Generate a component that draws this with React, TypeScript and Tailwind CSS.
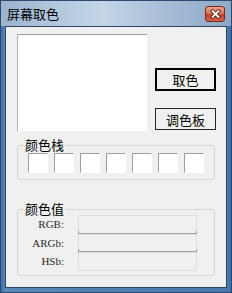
import React from 'react'

const cjk = "font-['Microsoft_YaHei','Noto_Sans_CJK_SC',sans-serif]"

function Swatch() {
  return (
    <div className="w-[20px] h-[20px] bg-white border-t border-l border-t-[#a0a0a0] border-l-[#a0a0a0] border-b border-r border-b-white border-r-white" />
  )
}

function ValueRow({ label, h, line }: { label: string; h: string; line: boolean }) {
  return (
    <div className={`flex items-center ${h}`}>
      <div className="w-[47px] text-right pr-[1px] font-['Liberation_Serif',serif] text-[11px] leading-[11px] text-[#2a2a2a]">
        {label}
      </div>
      <div className="ml-[13px] w-[119px] h-full relative border border-[#dedede] bg-[#f0f0f0]">
        {line && (
          <div className="absolute left-[-1px] right-[-1px] bottom-[-1px] h-[3px] border-b border-[#a2a2a2] border-l border-r" />
        )}
      </div>
    </div>
  )
}

export default function App() {
  return (
    <div className={`w-[232px] h-[293px] flex flex-col border border-[#2a4a72] bg-[linear-gradient(90deg,#3f6da3,#5b86b8_4px,#4a78ad_228px,#3a679c)] ${cjk}`}>
      {/* 标题栏 */}
      <div className="h-[25px] flex items-start justify-between bg-[linear-gradient(90deg,#9cb3cd_0%,#b4c8de_25%,#c3d4e7_45%,#a8bed7_70%,#8ea8c6_100%)]">
        <div className="pl-[6px] pt-[5px] text-[13px] leading-[15px] text-black">屏幕取色</div>
        <div className="mt-[5px] mr-[6px] w-[20px] h-[16px] rounded-[3px] border border-[#7b2b1c] bg-[linear-gradient(180deg,#eda593_0%,#d9745c_45%,#c2412a_55%,#d0624a_100%)] flex items-center justify-center">
          <svg width="11" height="10" viewBox="0 0 11 10">
            <path d="M2.5 2 L8.5 8 M8.5 2 L2.5 8" stroke="#5a1d12" strokeWidth="3.6" strokeLinecap="square" />
            <path d="M2.5 2 L8.5 8 M8.5 2 L2.5 8" stroke="#ffffff" strokeWidth="1.8" strokeLinecap="square" />
          </svg>
        </div>
      </div>

      {/* 客户区 */}
      <div className="mx-[4px] mb-[4px] flex-1 border border-[#2c4560] bg-[#f0f0f0] pl-[11px] pt-[7px]">
        <div className="flex">
          <div className="w-[130px] h-[97px] bg-white border-t border-l border-t-[#a0a0a0] border-l-[#b4b4b4]" />
          <div className="ml-[8px] pt-[34px] flex flex-col">
            <button className="w-[61px] h-[23px] border-2 border-black bg-[#f0f0f0] text-[13px] leading-[13px] text-black">
              取色
            </button>
            <button className="mt-[17px] w-[61px] h-[22px] border border-[#262626] bg-[#f0f0f0] text-[13px] leading-[13px] text-black">
              调色板
            </button>
          </div>
        </div>

        {/* 颜色栈 */}
        <div className="mt-[14px] w-[198px] border border-[#d6d6d6] rounded-[3px] pb-[6px]">
          <div className="-mt-[8px] ml-[6px] w-fit px-[1px] bg-[#f0f0f0] text-[13px] leading-[14px] text-black">颜色栈</div>
          <div className="mt-[1px] pl-[10px] flex gap-[6px]">
            {Array.from({ length: 7 }).map((_, i) => (
              <Swatch key={i} />
            ))}
          </div>
        </div>

        {/* 颜色值 */}
        <div className="mt-[29px] w-[198px] border border-[#d6d6d6] rounded-[3px] pb-[4px]">
          <div className="-mt-[8px] ml-[6px] w-fit px-[1px] bg-[#f0f0f0] text-[13px] leading-[14px] text-black">颜色值</div>
          <div className="-mt-[1px] flex flex-col">
            <ValueRow label="RGB:" h="h-[19px]" line />
            <ValueRow label="ARGb:" h="h-[18px]" line />
            <ValueRow label="HSb:" h="h-[19px]" line={false} />
          </div>
        </div>
      </div>
    </div>
  )
}
